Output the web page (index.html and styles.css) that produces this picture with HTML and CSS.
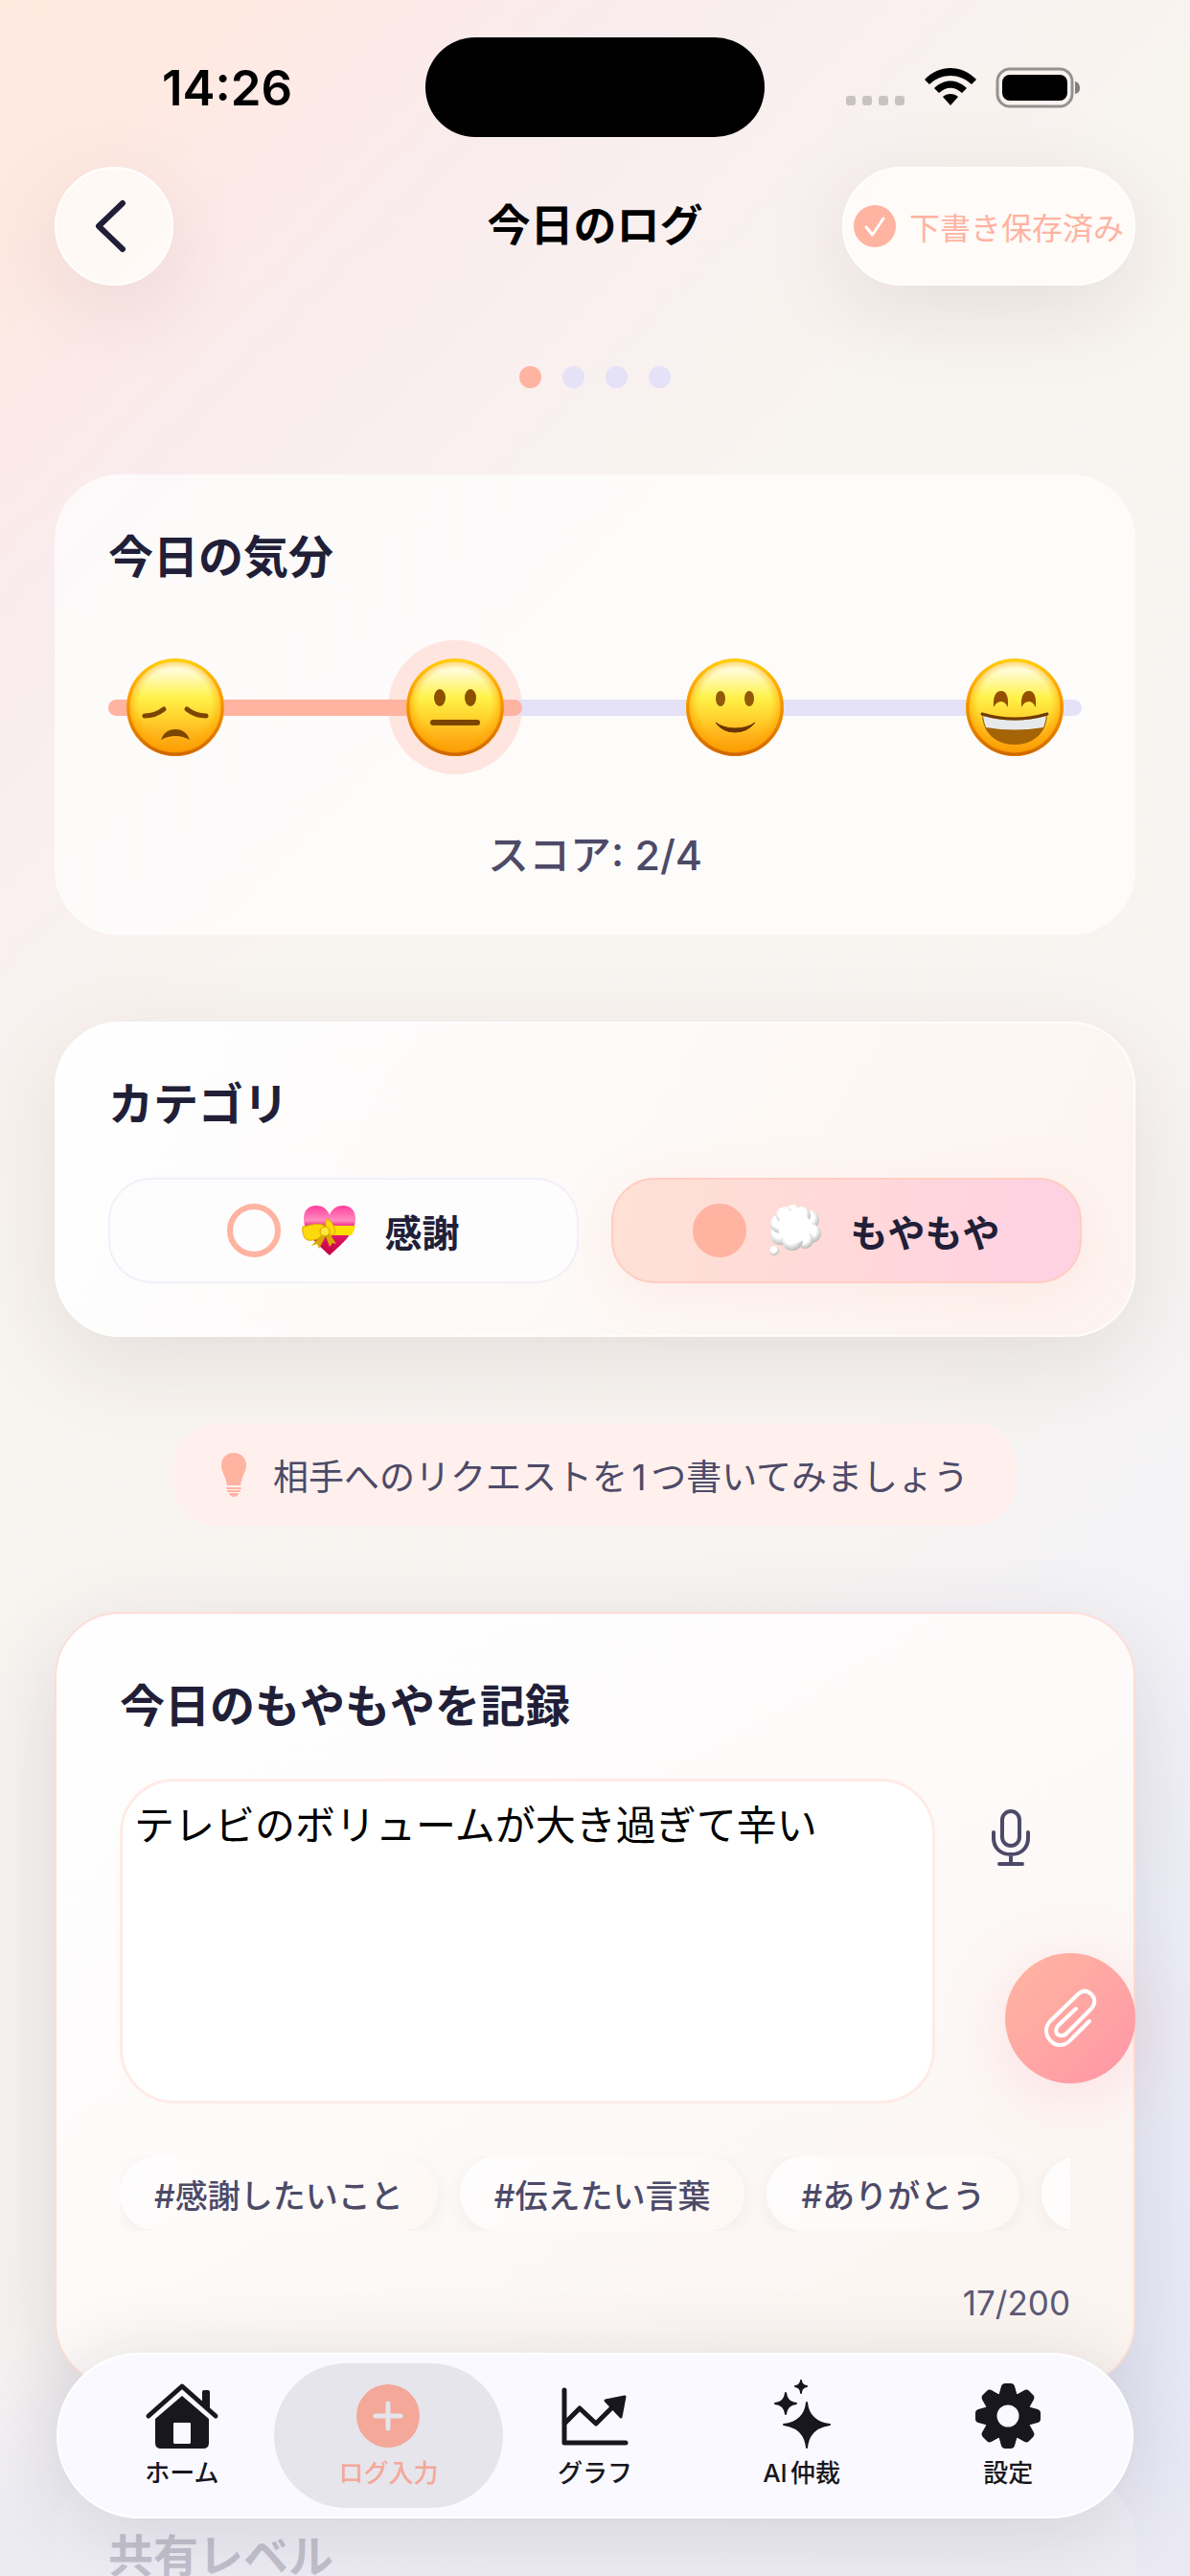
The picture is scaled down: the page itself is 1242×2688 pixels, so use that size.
FILE: index.html
```html
<!DOCTYPE html>
<html lang="ja">
<head>
    <meta charset="UTF-8">
    <meta name="viewport" content="width=device-width, initial-scale=1.0">
    <title>今日のログ</title>
    <link rel="stylesheet" href="styles.css">
</head>
<body>
    <!-- Shared gradients and shapes -->
    <svg class="defs" width="0" height="0" aria-hidden="true">
        <defs>
            <linearGradient id="face" x1="0" y1="0" x2="0" y2="1">
                <stop offset="0" stop-color="#fff9c0"/>
                <stop offset="0.12" stop-color="#fffcd8"/>
                <stop offset="0.4" stop-color="#fff24a"/>
                <stop offset="0.6" stop-color="#ffd42e"/>
                <stop offset="0.82" stop-color="#ffae18"/>
                <stop offset="1" stop-color="#f59408"/>
            </linearGradient>
            <radialGradient id="rim" cx="0.5" cy="0.47" r="0.54">
                <stop offset="0.68" stop-color="#ffb000" stop-opacity="0"/>
                <stop offset="0.87" stop-color="#ffa200" stop-opacity="0.6"/>
                <stop offset="1" stop-color="#dc7200"/>
            </radialGradient>
            <linearGradient id="rimTop" x1="0" y1="0" x2="0" y2="1">
                <stop offset="0" stop-color="#ffcf00"/>
                <stop offset="0.35" stop-color="#ff9a00" stop-opacity="0.9"/>
                <stop offset="1" stop-color="#cf6800"/>
            </linearGradient>
            <linearGradient id="heart" x1="0" y1="0" x2="0" y2="1">
                <stop offset="0" stop-color="#ff3f9c"/>
                <stop offset="0.3" stop-color="#ff8cc0"/>
                <stop offset="0.42" stop-color="#f0207c"/>
                <stop offset="1" stop-color="#c4003c"/>
            </linearGradient>
            <radialGradient id="puff" cx="0.42" cy="0.36" r="0.64">
                <stop offset="0.5" stop-color="#ffffff"/>
                <stop offset="1" stop-color="#b9b9b9"/>
            </radialGradient>
            <g id="head">
                <circle cx="51" cy="51" r="51" fill="url(#face)"/>
                <circle cx="51" cy="51" r="51" fill="url(#rim)"/>
                <circle cx="51" cy="51" r="49" fill="none" stroke="url(#rimTop)" stroke-width="3"/>
            </g>
        </defs>
    </svg>

    <div class="screen">
        <div class="status-bar">
            <span class="time">14:26</span>
            <span class="island"></span>
            <div class="status-icons">
                <svg width="62" height="42" viewBox="0 0 62 42" fill="#c8c2c0">
                    <rect x="0" y="30" width="10" height="10" rx="3"/>
                    <rect x="17" y="30" width="10" height="10" rx="3"/>
                    <rect x="34" y="30" width="10" height="10" rx="3"/>
                    <rect x="51" y="30" width="10" height="10" rx="3"/>
                </svg>
                <svg width="54" height="42" viewBox="0 0 54 42">
                    <path d="M0 13C15-3 39-3 54 13L49 18C36 6 18 6 5 18Z"/>
                    <path d="M10 22C20 12 34 12 44 22L39 27C31 20 23 20 15 27Z"/>
                    <path d="M19 31C23 27 31 27 35 31L27 40Z"/>
                </svg>
                <svg width="88" height="42" viewBox="0 0 88 42">
                    <rect x="2" y="2" width="78" height="39" rx="13" fill="none" stroke="#96908e" stroke-width="3"/>
                    <rect x="7" y="8" width="68" height="27" rx="8"/>
                    <path d="M83 15C87 16 88 19 88 22C88 25 87 27 83 28Z" fill="#837e7d"/>
                </svg>
            </div>
        </div>

        <header class="header">
            <button class="back" type="button" aria-label="戻る">
                <svg width="34" height="56" viewBox="0 0 34 56" fill="none" stroke="#211f38" stroke-width="6" stroke-linecap="round" stroke-linejoin="round"><path d="M30 4L5 28L30 52"/></svg>
            </button>
            <h1>今日のログ</h1>
            <button class="draft" type="button">
                <svg width="44" height="44" viewBox="0 0 44 44">
                    <circle cx="22" cy="22" r="22" fill="#ffb3a1"/>
                    <path d="M13 23L19.500 31L31 14" fill="none" stroke="#fff" stroke-width="3" stroke-linecap="round" stroke-linejoin="round"/>
                </svg>
                下書き保存済み
            </button>
        </header>

        <main>
            <div class="steps">
                <span class="step active"></span>
                <span class="step"></span>
                <span class="step"></span>
                <span class="step"></span>
            </div>

            <section class="card mood-card">
                <h2>今日の気分</h2>
                <div class="moods">
                    <button class="mood" type="button" aria-label="1">
                        <svg width="102" height="102" viewBox="0 0 102 102">
                            <use href="#head"/>
                            <g fill="none" stroke="#7c4500" stroke-linecap="round">
                                <path d="M19 60Q30 60 39 53" stroke-width="5"/>
                                <path d="M83 60Q72 60 63 53" stroke-width="5"/>
                            </g>
                            <path d="M36 85Q40 74 51 74Q62 74 66 85Q59 81 51 81Q43 81 36 85Z" fill="#7c4500"/>
                        </svg>
                    </button>
                    <button class="mood selected" type="button" aria-label="2">
                        <svg width="102" height="102" viewBox="0 0 102 102">
                            <use href="#head"/>
                            <ellipse cx="35" cy="41" rx="6" ry="9" fill="#8c5000"/>
                            <ellipse cx="67" cy="41" rx="6" ry="9" fill="#8c5000"/>
                            <path d="M28 67H74" stroke="#7c4500" stroke-width="6" stroke-linecap="round"/>
                        </svg>
                    </button>
                    <button class="mood" type="button" aria-label="3">
                        <svg width="102" height="102" viewBox="0 0 102 102">
                            <use href="#head"/>
                            <ellipse cx="36" cy="42" rx="5" ry="8" fill="#94580a"/>
                            <ellipse cx="66" cy="42" rx="5" ry="8" fill="#94580a"/>
                            <path d="M31 67Q38 77 51 77Q64 77 72 67Q64 73 51 73Q39 73 31 67Z" fill="#6a3400" stroke="#6a3400" stroke-linejoin="round"/>
                        </svg>
                    </button>
                    <button class="mood" type="button" aria-label="4">
                        <svg width="102" height="102" viewBox="0 0 102 102">
                            <use href="#head"/>
                            <path d="M29 51Q28 34 37 34Q45 34 44 51Q41 45 37 45Q32 45 29 51Z" fill="#945000"/>
                            <path d="M58 51Q57 34 66 34Q74 34 73 51Q70 45 66 45Q61 45 58 51Z" fill="#945000"/>
                            <path d="M17 58Q51 68 85 58C85 77 71 90 51 90C31 90 17 77 17 58Z" fill="#a56405"/>
                            <path d="M18 60Q51 69 84 60Q83 67 81 72Q51 77 21 72Q19 67 18 60Z" fill="#e6e9eb"/>
                            <path d="M17 58Q51 68 85 58" fill="none" stroke="#6f3b00" stroke-width="3" stroke-linecap="round"/>
                        </svg>
                    </button>
                </div>
                <p class="score">スコア: 2/4</p>
            </section>

            <section class="card category-card">
                <h2>カテゴリ</h2>
                <div class="categories">
                    <label class="category">
                        <input type="radio" name="category">
                        <svg width="62" height="56" viewBox="0 0 62 56">
                            <path d="M31 54C22 45 4 32 4 16C4 7 9 2 17 2C24 2 29 6 31 12C33 6 38 2 45 2C53 2 58 7 58 16C58 32 40 45 31 54Z" fill="url(#heart)"/>
                            <path d="M27 23H58Q57 28 54 33H27Z" fill="#ffe000"/>
                            <path d="M27 24C20 18 7 24 3 24C2 29 4 37 8 38C16 39 21 36 26 32C29 35 34 34 37 30C36 23 34 18 28 16Q26 20 27 24Z" fill="#fbd90b" stroke="#dda700"/>
                            <path d="M23 32L12 44L18 42L20 47L27 34L31 45L34 41L38 42L31 31Z" fill="#d9a900"/>
                            <circle cx="26" cy="29" r="5" fill="#ffe637" stroke="#cf9a00"/>
                        </svg>
                        <span>感謝</span>
                    </label>
                    <label class="category selected">
                        <input type="radio" name="category" checked>
                        <svg width="62" height="56" viewBox="0 0 62 56" fill="url(#puff)">
                            <circle cx="46" cy="17" r="10"/>
                            <circle cx="48" cy="31" r="10"/>
                            <circle cx="41" cy="38" r="9"/>
                            <circle cx="16" cy="32" r="11"/>
                            <circle cx="28" cy="38" r="11"/>
                            <circle cx="15" cy="21" r="10"/>
                            <circle cx="29" cy="9" r="8"/>
                            <circle cx="20" cy="12" r="9"/>
                            <circle cx="38" cy="12" r="9"/>
                            <circle cx="30" cy="24" r="17" fill="#fff"/>
                            <circle cx="9" cy="49" r="5"/>
                        </svg>
                        <span>もやもや</span>
                    </label>
                </div>
            </section>

            <div class="hint">
                <svg width="26" height="46" viewBox="0 0 26 46" fill="#ffb3a1">
                    <path d="M13 0C21 0 26 6 26 13C26 20 21 25 20 34H6C5 25 0 20 0 13C0 6 5 0 13 0Z"/>
                    <rect x="5" y="36" width="16" height="2" rx="1"/>
                    <rect x="6" y="39" width="14" height="2" rx="1"/>
                    <path d="M8 42H18C17 45 15 46 13 46C11 46 9 45 8 42Z"/>
                </svg>
                <span>相手へのリクエストを1つ書いてみましょう</span>
            </div>

            <section class="card log-card">
                <h2><label for="log">今日のもやもやを記録</label></h2>
                <div class="log-row">
                    <textarea id="log">テレビのボリュームが大き過ぎて辛い</textarea>
                    <button class="mic" type="button" aria-label="音声入力">
                        <svg width="40" height="60" viewBox="0 0 40 60" fill="none" stroke="#4d4a68" stroke-width="4" stroke-linecap="round">
                            <rect x="11" y="2" width="18" height="36" rx="9"/>
                            <path d="M2 24V30C2 41 10 47 20 47C30 47 38 41 38 30V24M20 47V57M8 57H32"/>
                        </svg>
                    </button>
                </div>
                <button class="clip" type="button" aria-label="添付">
                    <svg width="54" height="60" viewBox="0 0 54 60" fill="none" stroke="#fff" stroke-width="4" stroke-linecap="round" stroke-linejoin="round">
                        <path d="M47 33L28 52C22 59 13 60 7 54C1 48 0 40 6 33L34 6C39 1 44 0 49 5C54 10 53 16 48 21L24 45C20 49 17 49 14 47C11 44 12 40 15 37L33 20"/>
                    </svg>
                </button>
                <div class="tags">
                    <button class="tag" type="button">#感謝したいこと</button>
                    <button class="tag" type="button">#伝えたい言葉</button>
                    <button class="tag" type="button">#ありがとう</button>
                    <span class="tag next"></span>
                </div>
                <p class="count">17/200</p>
            </section>

            <section class="card share-card">
                <h2>共有レベル</h2>
            </section>
        </main>

        <div class="fade"></div>

        <nav class="tab-bar">
            <a href="#">
                <svg width="78" height="70" viewBox="0 0 78 70" fill="#17171d">
                    <path d="M4 35L39 4L74 35" fill="none" stroke="#17171d" stroke-width="5" stroke-linecap="round" stroke-linejoin="round"/>
                    <path d="M60 10Q60 8 62 8H66Q68 8 68 10V30L60 22Z"/>
                    <path fill-rule="evenodd" d="M39 14L67 38V63Q67 69 61 69H17Q11 69 11 63V38ZM31 42Q30 42 30 43V62Q30 64 31 64H47Q48 64 48 62V43Q48 42 47 42Z"/>
                </svg>
                <span>ホーム</span>
            </a>
            <a href="#" class="active">
                <svg width="78" height="70" viewBox="0 0 78 70">
                    <circle cx="39" cy="35" r="33" fill="#f3a899"/>
                    <path d="M39 22V48M26 35H52" stroke="#e5e4ec" stroke-width="5" stroke-linecap="round"/>
                </svg>
                <span>ログ入力</span>
            </a>
            <a href="#">
                <svg width="78" height="70" viewBox="0 0 78 70" fill="none" stroke="#17171d" stroke-width="5" stroke-linecap="round" stroke-linejoin="round">
                    <path d="M7 8V63H71"/>
                    <path d="M8 42L23 27L40 43L60 23"/>
                    <path d="M50 19L70 15L66 36Z" fill="#17171d" stroke-width="3"/>
                </svg>
                <span>グラフ</span>
            </a>
            <a href="#">
                <svg width="78" height="70" viewBox="0 -2 78 70" fill="#17171d" stroke="#17171d" stroke-width="2" stroke-linejoin="round">
                    <path d="M44 19Q46 39 68 42Q46 45 44 66Q42 45 20 42Q42 39 44 19Z"/>
                    <path d="M22 9Q23 19 33 20Q23 21 22 31Q21 21 11 20Q21 19 22 9Z"/>
                    <path d="M38 -4Q38 1 44 2Q38 3 38 9Q38 3 32 2Q38 1 38 -4Z"/>
                </svg>
                <span>AI仲裁</span>
            </a>
            <a href="#">
                <svg width="78" height="70" viewBox="-39 -35 78 70" fill="#17171d">
                    <defs>
                        <path id="tooth" d="M-10 -20L-7 -31Q-6 -34 -3 -34H3Q6 -34 7 -31L10 -20Z"/>
                    </defs>
                    <circle r="18" fill="none" stroke="#17171d" stroke-width="13"/>
                    <use href="#tooth"/>
                    <use href="#tooth" transform="rotate(45)"/>
                    <use href="#tooth" transform="rotate(90)"/>
                    <use href="#tooth" transform="rotate(135)"/>
                    <use href="#tooth" transform="rotate(180)"/>
                    <use href="#tooth" transform="rotate(225)"/>
                    <use href="#tooth" transform="rotate(270)"/>
                    <use href="#tooth" transform="rotate(315)"/>
                </svg>
                <span>設定</span>
            </a>
        </nav>
    </div>
</body>
</html>
```

FILE: styles.css
```css
* {
    box-sizing: border-box;
}

body {
    margin: 0;
    font-family: Inter, "Noto Sans CJK JP", sans-serif;
    color: #211f38;
    text-autospace: normal;
}

h1, h2, p {
    margin: 0;
}

button {
    font-family: inherit;
    border: none;
    padding: 0;
    cursor: pointer;
}

svg {
    display: block;
    flex: none;
    overflow: visible;
}

.defs {
    position: absolute;
}

.screen {
    position: relative;
    height: 100vh;
    overflow: hidden;
    background: linear-gradient(135deg, #ffeae0 0%, #ffeae1 6%, #fdeae8 11%, #f9ecee 17%, #f9f0ef 24%, #f8f4f0 33%, #f8f4f1 60%, #f2f2f7 76%, #e5e8f8 100%);
}

/* Status bar */
.status-bar {
    display: grid;
    grid-template-columns: 1fr 354px 1fr;
    align-items: center;
    padding-top: 39px;
    color: #000;
}

.time {
    padding-left: 30px;
    font-size: 51px;
    font-weight: 600;
    text-align: center;
}

.island {
    height: 104px;
    border-radius: 52px;
    background: #000;
}

.status-icons {
    display: flex;
    justify-content: center;
    gap: 20px;
    padding-right: 30px;
}

/* Header */
.header {
    display: grid;
    grid-template-columns: 1fr auto 1fr;
    align-items: center;
    padding: 31px 57px 0;
}

.header h1 {
    font-size: 45px;
    font-weight: 600;
    line-height: 60px;
    color: #000;
}

.back, .draft {
    display: flex;
    align-items: center;
    justify-content: center;
    height: 124px;
    border: 2px solid #fff;
    border-radius: 62px;
    background: rgba(255, 252, 250, 0.8);
    box-shadow: 0 24px 96px rgba(60, 30, 30, 0.1);
}

.back {
    width: 124px;
    padding-right: 8px;
}

.draft {
    justify-self: end;
    gap: 14px;
    padding: 0 10px;
    font-size: 32px;
    color: #ffb3a1;
    white-space: nowrap;
}

/* Content */
main {
    display: flex;
    flex-direction: column;
    gap: 90px;
    padding: 84px 57px 0;
}

.steps {
    display: flex;
    justify-content: center;
    gap: 22px;
}

.step {
    width: 23px;
    height: 23px;
    border-radius: 50%;
    background: #e5e1f7;
}

.step.active {
    background: #ffb3a1;
}

.card {
    padding: 56px;
    border-radius: 68px;
    background: rgba(255, 255, 255, 0.7);
}

.card h2 {
    font-size: 47px;
    font-weight: 600;
    line-height: 60px;
}

/* Mood */
.moods {
    position: relative;
    display: flex;
    justify-content: space-between;
    margin: 57px 0 56px;
}

/* Track, then the filled part up to the selected face */
.moods::before, .moods::after {
    content: "";
    position: absolute;
    left: 0;
    top: 62px;
    width: 100%;
    height: 17px;
    border-radius: 9px;
    background: #e5e1f7;
}

.moods::after {
    width: calc((100% - 140px) / 3 + 140px);
    background: #ffb3a1;
}

.mood {
    display: flex;
    align-items: center;
    justify-content: center;
    width: 140px;
    height: 140px;
    border-radius: 50%;
    background: none;
}

.mood svg {
    position: relative;
    z-index: 1;
}

.mood.selected {
    background: #ffe5df;
}

.score {
    font-size: 43px;
    font-weight: 500;
    line-height: 56px;
    color: #4d4a68;
    text-align: center;
}

/* Category */
.category-card {
    background: linear-gradient(120deg, #fff 0%, #fdfbfa 35%, #fdf8f4 65%, #fdf3f0 100%);
    box-shadow: 0 28px 96px rgba(60, 40, 40, 0.1), inset 0 0 0 2px rgba(255, 255, 255, 0.7);
}

.categories {
    display: flex;
    gap: 34px;
    margin-top: 47px;
}

.category {
    display: flex;
    flex: 1;
    align-items: center;
    justify-content: center;
    height: 110px;
    border: 2px solid #f2effc;
    border-radius: 45px;
    background: #fefdfd;
    font-size: 39px;
    font-weight: 600;
}

.category.selected {
    border-color: #ffcdc3;
    background: linear-gradient(100deg, #ffe1d5, #ffd9d9 50%, #ffd2e1 85%);
    box-shadow: 0 12px 56px rgba(255, 179, 171, 0.18);
}

.category input {
    appearance: none;
    width: 56px;
    height: 56px;
    margin: 0 20px 0 0;
    border: 6px solid #ffb3a1;
    border-radius: 50%;
}

.category input:checked {
    background: #ffb3a1;
}

.category span {
    margin-left: 26px;
}

/* Hint */
.hint {
    display: flex;
    align-items: center;
    align-self: center;
    gap: 28px;
    height: 107px;
    padding: 0 50px;
    border-radius: 45px;
    background: #fff0ed;
    font-size: 37px;
    color: #4d4a68;
    white-space: nowrap;
}

/* Log */
.log-card {
    position: relative;
    padding: 66px;
    border: 2px solid #fcded7;
    background: linear-gradient(150deg, #fff 0%, #fefcfc 30%, #fcf8f6 65%, #fbf4ef 100%);
    box-shadow: 0 28px 96px rgba(50, 40, 70, 0.14);
}

.log-row {
    display: flex;
    align-items: flex-start;
    gap: 17px;
    margin-top: 46px;
}

.log-row textarea {
    flex: 1;
    height: 339px;
    padding: 18px 12px;
    border: 3px solid #ffebe6;
    border-radius: 57px;
    background: #fff;
    font-family: inherit;
    font-size: 42px;
    line-height: 56px;
    color: #000;
    resize: none;
    outline: none;
    overflow: hidden;
}

.mic {
    display: flex;
    align-items: center;
    justify-content: center;
    width: 124px;
    height: 124px;
    background: none;
}

/* Floats over the card edge */
.clip {
    position: absolute;
    top: 354px;
    right: -2px;
    display: flex;
    align-items: center;
    justify-content: center;
    width: 136px;
    height: 136px;
    border-radius: 50%;
    background: linear-gradient(135deg, #ffb3a1 10%, #ff99a6 90%);
    box-shadow: 0 12px 64px rgba(255, 153, 166, 0.25);
}

.tags {
    display: flex;
    gap: 23px;
    margin-top: 55px;
    overflow: hidden;
}

.tag {
    flex: none;
    height: 78px;
    padding: 0 36px;
    border-radius: 39px;
    background: linear-gradient(120deg, #fefdfd, #fdf8f4);
    box-shadow: 0 4px 20px rgba(60, 40, 40, 0.05);
    font-size: 34px;
    font-weight: 500;
    color: #4d4a68;
}

.tag.next {
    width: 262px;
}

.count {
    margin-top: 55px;
    font-size: 35px;
    line-height: 40px;
    color: #5d5a77;
    text-align: right;
}

/* Bottom */
.fade {
    position: absolute;
    left: 0;
    right: 0;
    bottom: 0;
    height: 240px;
    background: linear-gradient(rgba(234, 233, 242, 0), rgba(234, 233, 242, 0.8) 80%);
}

.tab-bar {
    position: absolute;
    left: 59px;
    right: 59px;
    bottom: 60px;
    display: flex;
    height: 173px;
    padding: 9px 21px;
    border: 2px solid #fff;
    border-radius: 87px;
    background: #faf9ff;
    box-shadow: 0 12px 84px rgba(40, 30, 50, 0.14);
}

.tab-bar a {
    display: flex;
    flex: 1;
    flex-direction: column;
    align-items: center;
    padding-top: 20px;
    font-size: 26px;
    font-weight: 500;
    line-height: 36px;
    gap: 7px;
    color: #17171d;
    text-decoration: none;
}

.tab-bar a.active {
    margin: 0 -12px;
    padding-left: 12px;
    padding-right: 12px;
    border-radius: 76px;
    background: #e6e5ec;
    color: #f3a899;
}
```
